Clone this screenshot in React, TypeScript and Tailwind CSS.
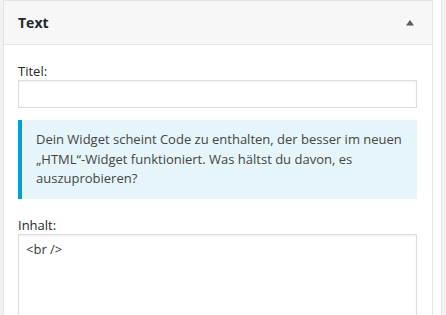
export default function App() {
  return (
    <div
      className="flex h-[315px] w-[446px] items-start overflow-hidden bg-[#f1f1f1] pl-[3px] text-[#23282d]"
      style={{ fontFamily: '"Open Sans", "Noto Sans", sans-serif' }}
    >
      <div className="flex w-[430px] shrink-0 flex-col border border-[#e5e5e5] bg-white pb-[20px]">
        <div className="flex h-[44px] shrink-0 items-center justify-between border-b border-[#e5e5e5] bg-[#f7f7f7] pl-[14px] pr-[17px]">
          <h3 className="text-[14px] font-bold leading-none">Text</h3>
          <svg width="10" height="7" viewBox="0 0 10 7" className="mb-[1px]">
            <path d="M1 6.5 L5 1 L9 6.5 Z" fill="#555d66" />
          </svg>
        </div>
        <div className="flex flex-col px-[14px] pt-[18px]">
          <label className="text-[13px] leading-[17px]">Titel:</label>
          <div className="h-[28px] w-[399px] shrink-0 border border-[#dddddd] bg-white shadow-[inset_0_1px_2px_rgba(0,0,0,0.07)]" />
          <div className="mt-[12px] w-[399px] shrink-0 border-l-4 border-[#00a0d2] bg-[#e5f5fa] py-[10px] pl-[14px] pr-[12px]">
            <p className="text-[13px] leading-[19.5px] text-[#444]">
              Dein Widget scheint Code zu enthalten, der besser im neuen
              „HTML“-Widget funktioniert. Was hältst du davon, es
              auszuprobieren?
            </p>
          </div>
          <label className="mt-[18px] text-[13px] leading-[17px]">Inhalt:</label>
          <div className="h-[120px] w-[399px] shrink-0 border border-[#dddddd] bg-white px-[7px] py-[4px] text-[13px] leading-[20px] text-[#32373c] shadow-[inset_0_1px_2px_rgba(0,0,0,0.07)]">
            &lt;br /&gt;
          </div>
        </div>
      </div>
      <div className="h-full w-[8px] shrink-0 bg-white" />
      <div className="h-full w-px shrink-0 bg-[#e5e5e5]" />
    </div>
  );
}
